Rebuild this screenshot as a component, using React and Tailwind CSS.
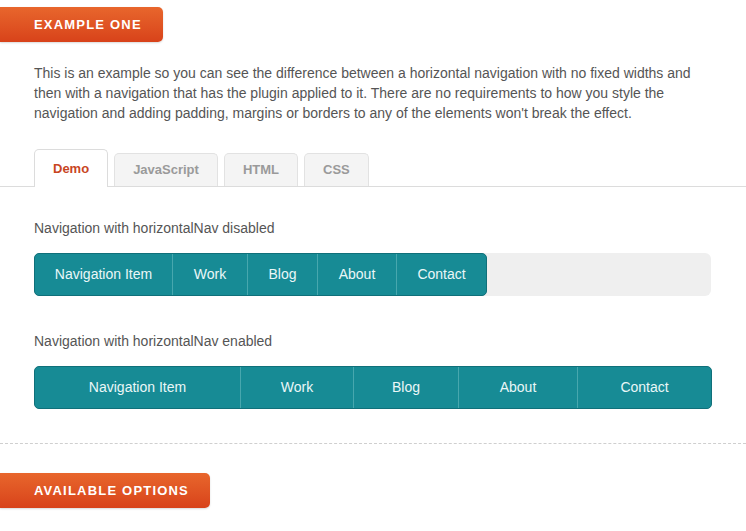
import React from 'react';

const items = [
    { label: 'Navigation Item', w: 'w-[137px]', wide: 'w-[205px]' },
    { label: 'Work', w: 'w-[75px]', wide: 'w-[113px]' },
    { label: 'Blog', w: 'w-[70px]', wide: 'w-[105px]' },
    { label: 'About', w: 'w-[79px]', wide: 'w-[119px]' },
    { label: 'Contact', w: 'w-[90px]', wide: 'flex-1' },
];

const tabs = ['Demo', 'JavaScript', 'HTML', 'CSS'];

const Badge = ({ children }) => (
    <div className="inline-flex h-[35px] items-center rounded-r-[5px] bg-gradient-to-b from-[#e8662c] to-[#d8421a] pl-[34px] pr-[21px] shadow-[0_1px_2px_rgba(0,0,0,0.15)]">
        <span className="text-[13px] font-bold uppercase tracking-[1.2px] text-white">{children}</span>
    </div>
);

const Nav = ({ stretch }) => (
    <div className={`flex h-[43px] overflow-hidden rounded-[5px] border border-[#10707a] bg-[#178b95] ${stretch ? 'w-full' : ''}`}>
        {items.map((item, i) => (
            <a
                key={item.label}
                className={`flex shrink-0 items-center justify-center text-[14px] text-[#eaf7f8] ${i > 0 ? 'border-l border-[#47a7ae]' : ''} ${stretch ? item.wide : item.w}`}
            >
                {item.label}
            </a>
        ))}
    </div>
);

const App = () => {
    return (
        <div className="h-[531px] w-[746px] overflow-hidden bg-white font-['Liberation_Sans',Arial,sans-serif]">
            <div className="pt-[7px]">
                <Badge>Example One</Badge>
            </div>

            {/* Intro */}
            <p className="mt-[21px] pl-[34px] pr-[42px] text-[14px] leading-[20px] text-[#555]">
                This is an example so you can see the difference between a horizontal navigation with no fixed widths and then with a navigation that has the plugin applied to it. There are no requirements to how you style the navigation and adding padding, margins or borders to any of the elements won't break the effect.
            </p>

            {/* Tabs */}
            <div className="mt-[26px] flex items-end gap-[6px] border-b border-[#dcdcdc] pl-[34px]">
                {tabs.map((tab, i) => (
                    <div
                        key={tab}
                        className={
                            i === 0
                                ? '-mb-px flex h-[38px] items-center rounded-t-[5px] border border-b-0 border-[#dcdcdc] bg-white px-[18px] text-[13px] font-bold text-[#c8461f]'
                                : 'flex h-[33px] items-center rounded-t-[5px] border border-b-0 border-[#e2e2e2] bg-[#f4f4f4] px-[18px] text-[13px] font-bold text-[#9a9a9a]'
                        }
                    >
                        {tab}
                    </div>
                ))}
            </div>

            <div className="px-[34px]">
                <p className="mt-[31px] text-[14px] leading-[20px] text-[#555]">Navigation with horizontalNav disabled</p>
                <div className="mt-[15px] mr-[1px] flex rounded-[6px] bg-[#efefef]">
                    <Nav />
                </div>

                <p className="mt-[35px] text-[14px] leading-[20px] text-[#555]">Navigation with horizontalNav enabled</p>
                <div className="mt-[15px]">
                    <Nav stretch />
                </div>
            </div>

            <div className="mt-[34px] border-t border-dashed border-[#cfcfcf]" />

            <div className="mt-[29px]">
                <Badge>Available Options</Badge>
            </div>
        </div>
    );
};

export default App;
